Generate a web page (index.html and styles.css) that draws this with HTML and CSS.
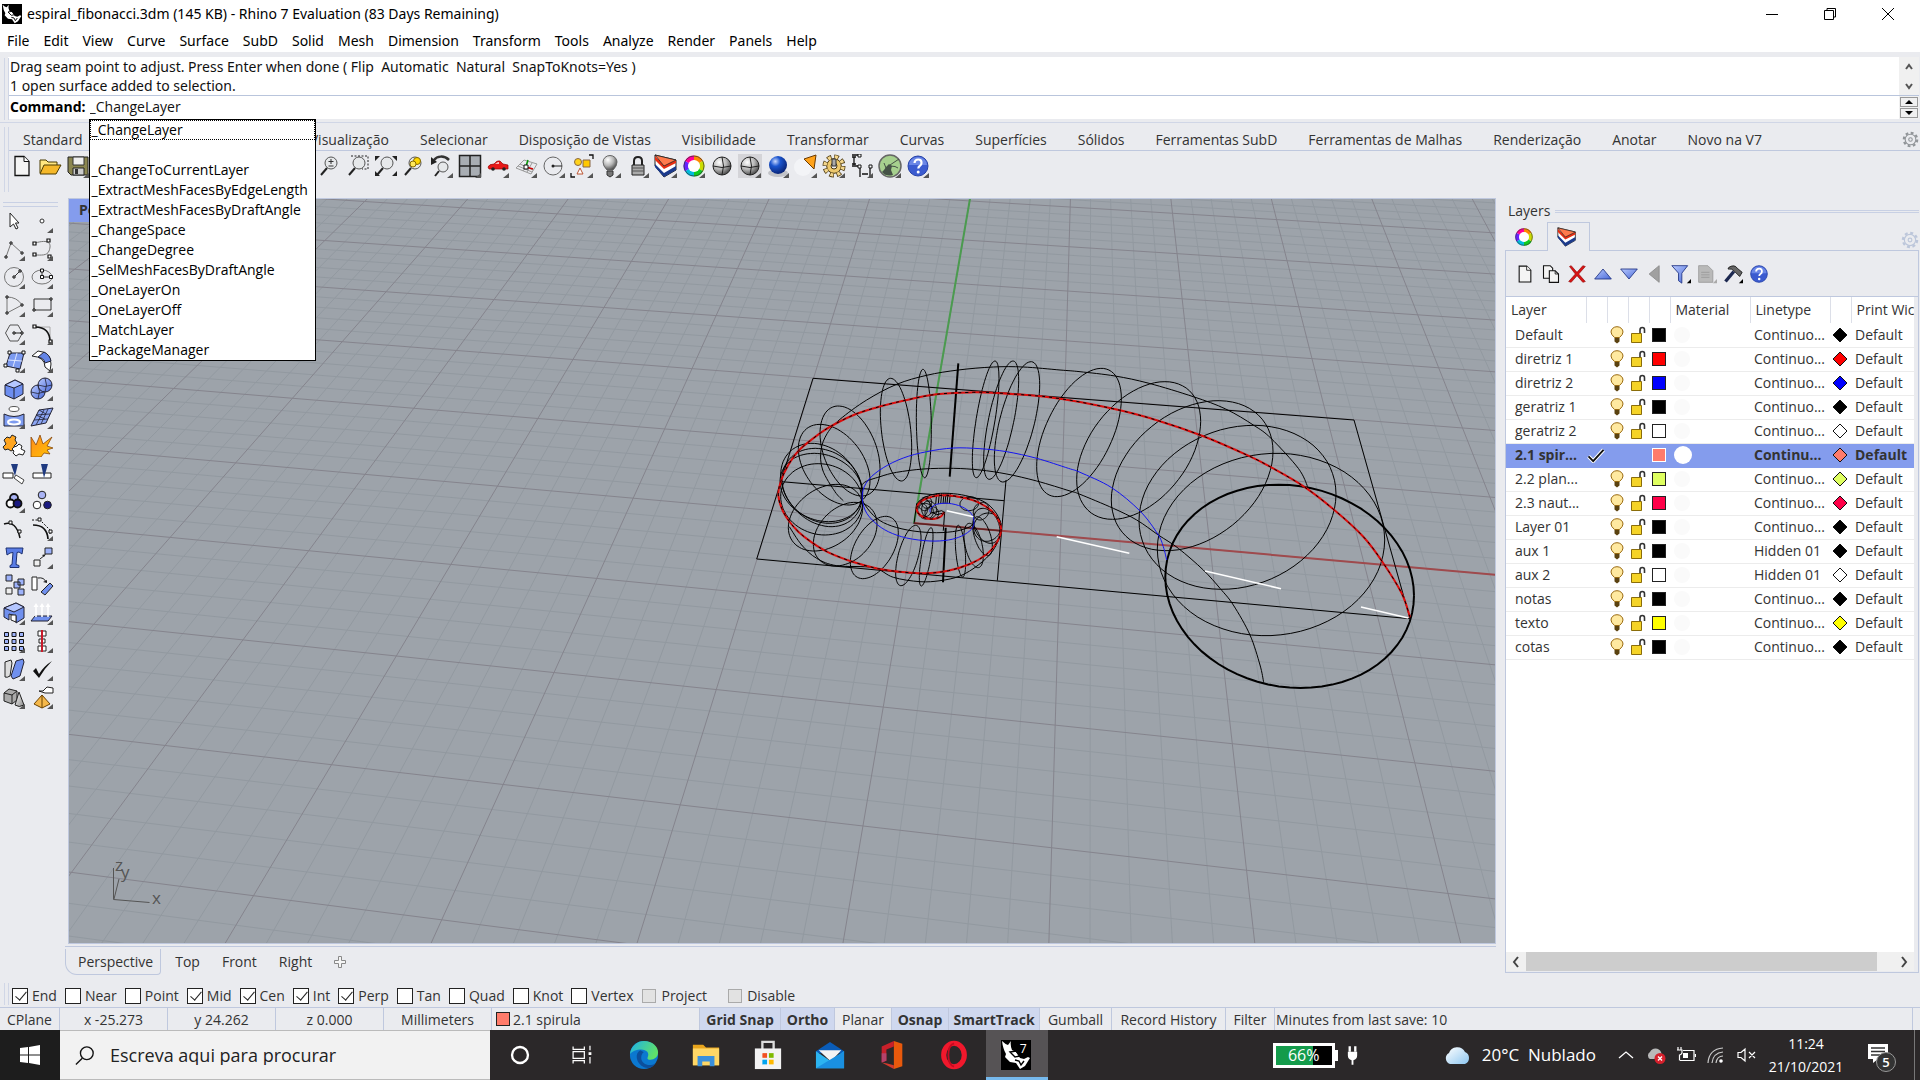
FILE: index.html
```html
<!DOCTYPE html>
<html lang="en">
<head>
<meta charset="utf-8">
<title>espiral_fibonacci.3dm (145 KB) - Rhino 7 Evaluation</title>
<link rel="stylesheet" href="styles.css">
</head>
<body>
<svg class="sprite" aria-hidden="true">
  <defs>
    <linearGradient id="gBlue" x1="0" y1="0" x2="1" y2="1"><stop offset="0" stop-color="#b9caff"/><stop offset="1" stop-color="#4a6ad8"/></linearGradient>
    <linearGradient id="gGrey" x1="0" y1="0" x2="1" y2="1"><stop offset="0" stop-color="#fff"/><stop offset="1" stop-color="#8a8a8a"/></linearGradient>
    <linearGradient id="gOrange" x1="0" y1="0" x2="1" y2="1"><stop offset="0" stop-color="#ff8a1e"/><stop offset="1" stop-color="#ffc400"/></linearGradient>
    <radialGradient id="rGrey" cx=".35" cy=".3" r=".8"><stop offset="0" stop-color="#fff"/><stop offset=".5" stop-color="#b5b5b5"/><stop offset="1" stop-color="#333"/></radialGradient>
    <radialGradient id="rBlue" cx=".35" cy=".3" r=".8"><stop offset="0" stop-color="#c8d8ff"/><stop offset=".35" stop-color="#1b55cf"/><stop offset="1" stop-color="#051a66"/></radialGradient>
    <linearGradient id="gCloud" x1="0" y1="0" x2="1" y2="1"><stop offset="0" stop-color="#fff"/><stop offset="1" stop-color="#8dc6f0"/></linearGradient>
    <linearGradient id="gEdge" x1="0" y1="0" x2="1" y2=".4"><stop offset="0" stop-color="#1cb0ea"/><stop offset="1" stop-color="#5fe06a"/></linearGradient>
    <symbol id="tick" viewBox="0 0 24 24"><path d="M23 19v5h-6z" fill="#555"/></symbol>
    <symbol id="page" viewBox="0 0 24 24"><path d="M5 2.500h9l5 5v14H5z" fill="#f4f4f4" stroke="#111" stroke-width="1.300"/><path d="M14 2.500v5h5" fill="#fff" stroke="#111"/></symbol>
    <symbol id="pages" viewBox="0 0 24 24"><path d="M3 2h8l3 3v12H3z" fill="#f4f4f4" stroke="#111" stroke-width="1.300"/><path d="M10 8h7l4 4v10H10z" fill="#f4f4f4" stroke="#111" stroke-width="1.300"/><path d="M17 8v4h4" fill="none" stroke="#111"/></symbol>
    <symbol id="folder" viewBox="0 0 24 24"><path d="M2 19V6h6l2 2h9v3" fill="#ffe680" stroke="#4b3a00"/><path d="M2 20 6 11h17l-5 9z" fill="#f5b82a" stroke="#4b3a00"/></symbol>
    <symbol id="save" viewBox="0 0 24 24"><path d="M2 3h20v18H5l-3-3z" fill="#8b8650" stroke="#222"/><path d="M7 3h11v8H7z" fill="#eee" stroke="#333"/><path d="M7 14h11v7H7z" fill="#ccc" stroke="#222"/><path d="M9 15h3v5H9z" fill="#333"/></symbol>
    <symbol id="mag" viewBox="0 0 24 24"><path d="m9 14-6 7" stroke="#222" stroke-width="2"/><circle cx="13" cy="9" r="6" fill="#e6e8ea" stroke="#555"/></symbol>
    <symbol id="zoom" viewBox="0 0 24 24"><use href="#mag"/><path d="M13 5v5M10.500 7.500h5M10.500 12h5" stroke="#333"/></symbol>
    <symbol id="zoomwin" viewBox="0 0 24 24"><use href="#mag"/><path d="M5 2h17v13H16" fill="none" stroke="#222" stroke-dasharray="2 1.500"/></symbol>
    <symbol id="zoomext" viewBox="0 0 24 24"><use href="#mag"/><path d="M1 2h5L1 7zM23 2v5l-5-5zM1 22v-5l5 5zM23 22h-5l5-5z" fill="#222"/></symbol>
    <symbol id="zoomsel" viewBox="0 0 24 24"><use href="#mag"/><circle cx="15" cy="7" r="3.500" fill="#ffd800" stroke="#886b00"/><circle cx="11" cy="10" r="3" fill="#ffe95a" stroke="#886b00"/></symbol>
    <symbol id="undoview" viewBox="0 0 24 24"><path d="m9 17-4 5" stroke="#222" stroke-width="2"/><circle cx="13" cy="13" r="5" fill="#e6e8ea" stroke="#555"/><path d="M19 6C14 1 7 2 4 6" fill="none" stroke="#333" stroke-width="2.500"/><path d="M1 3v8l6-3z" fill="#222"/></symbol>
    <symbol id="four" viewBox="0 0 24 24"><path d="M1.500 1.500h21v21h-21z" fill="#a8adb3" stroke="#222" stroke-width="1.500"/><path d="M12 1v22M1 12h22" stroke="#222" stroke-width="1.500"/></symbol>
    <symbol id="car" viewBox="0 0 24 24"><path d="M2 13q1-3 6-3 3-4 6-3l3 3 5 1v4H3z" fill="#e81818" stroke="#900" stroke-width=".7"/><path d="m9 10 3-2h1v2z" fill="#fbb"/><circle cx="7" cy="15" r="1.800" fill="#222"/><circle cx="18" cy="15" r="1.800" fill="#222"/></symbol>
    <symbol id="cplane" viewBox="0 0 24 24"><path d="m2 14 8-8 13 4-6 10zM6 10l13 6M4 12l14 6M14 8 9 17M18 9l-5 9" fill="none" stroke="#999"/><path d="m12 13 7 2" stroke="#c00" stroke-width="1.500"/><path d="m12 12 2-6" stroke="#090" stroke-width="1.500"/><path d="M10 11h4v4h-4z" fill="#fff" stroke="#111"/></symbol>
    <symbol id="circ" viewBox="0 0 24 24"><circle cx="11" cy="12" r="9" fill="none" stroke="#666"/><path d="M11 12h9" stroke="#222"/><circle cx="11" cy="12" r="1.500" fill="#222"/></symbol>
    <symbol id="shapes" viewBox="0 0 24 24"><path d="M19 1h4v4M1 19v4h4" fill="none" stroke="#111" stroke-width="1.300"/><circle cx="8" cy="8" r="3.500" fill="#ffd21c" stroke="#864"/><path d="M13 6h7v7h-7z" fill="#ffc800" stroke="#864"/><path d="m10 14 3 6H7z" fill="#fff" stroke="#b53"/></symbol>
    <symbol id="lamp" viewBox="0 0 24 24"><path d="M9 16q-4-4-4-8a7 6.500 0 0 1 14 0q0 4-4 8z" fill="url(#rGrey)" stroke="#666"/><path d="M9 17h6v4l-3 2-3-2z" fill="#777" stroke="#333"/></symbol>
    <symbol id="padlock" viewBox="0 0 24 24"><path d="M8 11V7q0-4 4-4t4 4v4" fill="none" stroke="#222" stroke-width="2"/><path d="M6 11h12v10H6z" fill="#aaa" stroke="#222"/><path d="M6 14h12M6 17h12" stroke="#555"/></symbol>
    <symbol id="cake" viewBox="0 0 24 24"><path d="M1 1v11l9 11 12-7V6z" fill="#fff" stroke="#222"/><path d="M1 10v3l9 10 12-7v-4l-12 7z" fill="#1b3a8c"/><path d="M1 2v4l9 9 12-6V6l-12 5z" fill="#e62e12"/><path d="m1 1 21 5-12 6z" fill="#ff7a4c" stroke="#222" stroke-width=".8"/></symbol>
    <symbol id="wheel" viewBox="0 0 24 24"><g fill="none" stroke-width="5"><path d="M12 4a8 8 0 0 1 6.930 4" stroke="#f80"/><path d="M18.930 8a8 8 0 0 1 0 8" stroke="#cd0"/><path d="M18.930 16A8 8 0 0 1 12 20" stroke="#1c2"/><path d="M12 20a8 8 0 0 1-6.930-4" stroke="#0bd"/><path d="M5.070 16a8 8 0 0 1 0-8" stroke="#62f"/><path d="M5.070 8A8 8 0 0 1 12 4" stroke="#f09"/></g><circle cx="12" cy="12" r="10" fill="none" stroke="#333" stroke-width=".7"/><circle cx="12" cy="12" r="6" fill="#fff"/></symbol>
    <symbol id="ball" viewBox="0 0 24 24"><circle cx="12" cy="12" r="9" fill="url(#rGrey)" stroke="#222"/><path d="M3 12q9 3 18 0M12 3q3 9 0 18" fill="none" stroke="#222"/></symbol>
    <symbol id="balldots" viewBox="0 0 24 24"><path d="M0 0h24v24H0z" fill="#d4d4d8"/><use href="#ball"/></symbol>
    <symbol id="blueball" viewBox="0 0 24 24"><ellipse cx="12" cy="19" rx="10" ry="4" fill="#c2c3c8"/><circle cx="12" cy="11" r="9" fill="url(#rBlue)"/></symbol>
    <symbol id="spot" viewBox="0 0 24 24"><circle cx="9" cy="13" r="9" fill="#f3f4f7"/><path d="m10 5 12-4-2 14z" fill="#ffa21a" stroke="#6b3a00"/></symbol>
    <symbol id="gears" viewBox="0 0 24 24"><circle cx="12" cy="12" r="9" fill="none" stroke="#4b3810" stroke-width="5" stroke-dasharray="4.300 2.770"/><circle cx="12" cy="12" r="7.300" fill="#edc86c" stroke="#4b3810"/><circle cx="12" cy="12" r="9" fill="none" stroke="#f3d68c" stroke-width="3.500" stroke-dasharray="3 4.070" stroke-dashoffset="-.6"/><circle cx="12" cy="12" r="3" fill="#eee" stroke="#4b3810"/><path d="M10 5h4v7h-4z" fill="#aaa" stroke="#333"/></symbol>
    <symbol id="dims" viewBox="0 0 24 24"><path d="M2 1h8M4 3v8M2 12h8v11M20 12v11M12 20h6M2 3h4M2 10h4" fill="none" stroke="#111" stroke-width="1.300"/><path d="M8 0h3v3H8zM8 11h3v3H8zM19 11h3v3h-3z" fill="#fff" stroke="#111"/></symbol>
    <symbol id="hopper" viewBox="0 0 24 24"><circle cx="12" cy="12" r="11" fill="#a6d08e" stroke="#666" stroke-width="1.500"/><path d="m8 13 3-3 3 2-1 4 2 5q-7 2-11-3l2-2z" fill="#455246"/><path d="m12 11 9-6M8 14 6 9M12 12q6 0 8 2" fill="none" stroke="#455246"/></symbol>
    <symbol id="help" viewBox="0 0 24 24"><circle cx="12" cy="12" r="10" fill="#3b5bd0" stroke="#2742a8"/><path d="M3 11a9 8 0 0 1 18 0z" fill="#6a86e6"/><path d="M8.500 9q.3-3.500 3.700-3.500T15.500 9q0 2-1.800 3-1.400.9-1.400 2.500" fill="none" stroke="#fff" stroke-width="2.200"/><circle cx="12.200" cy="18" r="1.500" fill="#fff"/></symbol>
    <symbol id="gear" viewBox="0 0 24 24"><circle cx="12" cy="12" r="9.500" fill="none" stroke="currentColor" stroke-width="3" stroke-dasharray="4 3.460"/><circle cx="12" cy="12" r="7.500" fill="none" stroke="currentColor" stroke-width="1.500"/><circle cx="12" cy="12" r="2.500" fill="none" stroke="currentColor" stroke-width="1.500"/></symbol>
    <symbol id="cursor" viewBox="0 0 24 24"><path d="M8 4v14l3.500-3 2.500 5 2-1-2.500-5H17z" fill="#fff" stroke="#222"/></symbol>
    <symbol id="point" viewBox="0 0 24 24"><circle cx="12" cy="12" r="2" fill="#fff" stroke="#333"/></symbol>
    <symbol id="pline" viewBox="0 0 24 24"><path d="M4 20 9 6l11 10" fill="none" stroke="#777"/><path d="M3 19h2v2H3zM8 5h2v2H8zM19 15h2v2h-2z" fill="#fff" stroke="#111"/></symbol>
    <symbol id="curve" viewBox="0 0 24 24"><path d="M5 6c14-4 17 0 14 8-2 5-8 4-14 4" fill="none" stroke="#777"/><path d="M3 5h3v3H3zM17 2h3v3h-3zM3 16h3v3H3zM18 18h3v3h-3z" fill="#fff" stroke="#111" stroke-width="1.200"/></symbol>
    <symbol id="circle" viewBox="0 0 24 24"><circle cx="12" cy="12" r="9.500" fill="none" stroke="#777"/><path d="m12 12 6-6" stroke="#333"/><path d="M11 11h2v2h-2zM17 5h2v2h-2z" fill="#fff" stroke="#111"/></symbol>
    <symbol id="oval" viewBox="0 0 24 24"><ellipse cx="12" cy="12" rx="10" ry="7" fill="none" stroke="#777"/><path d="M12 5v7h9" fill="none" stroke="#333"/><path d="M10.500 4h3v3h-3zM10.500 10.500h3v3h-3zM19.500 10.500h3v3h-3z" fill="#fff" stroke="#111"/></symbol>
    <symbol id="arc" viewBox="0 0 24 24"><path d="M5 4q10 0 15 8L5 20z" fill="none" stroke="#777"/><path d="M4 3h2v2H4zM19 11h2v2h-2zM4 19h2v2H4z" fill="#fff" stroke="#111"/></symbol>
    <symbol id="rect" viewBox="0 0 24 24"><path d="M4 6h17v11H4z" fill="none" stroke="#333"/><path d="M20 5h2v2h-2zM3 16h2v2H3z" fill="#fff" stroke="#111"/></symbol>
    <symbol id="hex" viewBox="0 0 24 24"><path d="m8 4h8l4.500 8-4.500 8H8l-4.500-8z" fill="none" stroke="#555"/><path d="M12 12h8" stroke="#222"/><path d="M11 11h2v2h-2zM19 11h2v2h-2z" fill="#fff" stroke="#111"/></symbol>
    <symbol id="fillet" viewBox="0 0 24 24"><path d="M5 6h15v15" fill="none" stroke="#aaa"/><path d="M5 6q15 0 15 15" fill="none" stroke="#111" stroke-width="1.700"/><path d="M3 4h3v3H3zM19 19h3v3h-3z" fill="#fff" stroke="#111" stroke-width="1.200"/></symbol>
    <symbol id="srf" viewBox="0 0 24 24"><path d="M8 4h14l-4 16-14-3z" fill="#7d9bf0" stroke="#223"/><path d="m15 4-4 14M6 11l14 1" stroke="#dfe7ff"/><path d="M6 2h3v3H6zM20 2h3v3h-3zM2 15h3v3H2zM14 20h3v3h-3z" fill="#fff" stroke="#111"/></symbol>
    <symbol id="sweep" viewBox="0 0 24 24"><path d="M2 7 8 2q13 1 13 13l-1 7-5-4Q15 8 2 7z" fill="#fff" stroke="#222"/><path d="m8 8 6-5q6 3 7 9l-6 2q-1-5-7-6z" fill="#6384e6" stroke="#223"/></symbol>
    <symbol id="box" viewBox="0 0 24 24"><path d="m3 8 10-5 8 4v10l-9 5-9-4z" fill="#6d8ef0" stroke="#223"/><path d="m3 8 9 3 9-4-8-4z" fill="#b4c6ff" stroke="#223"/><path d="M12 11v11" stroke="#223"/></symbol>
    <symbol id="spheres" viewBox="0 0 24 24"><circle cx="8" cy="15" r="7" fill="url(#gBlue)" stroke="#223"/><circle cx="15" cy="8" r="7" fill="url(#gBlue)" stroke="#223"/><path d="M8 8q3 6 0 14M1 15q7 3 13 0M15 1q3 7 0 14M8 8q7 3 14 0" fill="none" stroke="#223" stroke-width=".8"/></symbol>
    <symbol id="tube" viewBox="0 0 24 24"><ellipse cx="12" cy="4" rx="5" ry="2.500" fill="#fff" stroke="#555"/><path d="M2 9q10 5 20 0v12H2z" fill="#7d9bf0" stroke="#223"/><ellipse cx="12" cy="17" rx="6" ry="2.500" fill="none" stroke="#fff" stroke-width="2"/></symbol>
    <symbol id="mesh" viewBox="0 0 24 24"><path d="m9 5 14-2-7 15-15 3z" fill="#8ba5f2" stroke="#223"/><path d="m14 5-8 15M18 4l-7 15M6 10l14-1M4 15l14-1M9 5l7 4M6 10l9 4" fill="none" stroke="#223" stroke-width=".8"/></symbol>
    <symbol id="puzzle" viewBox="0 0 24 24"><path d="m2 7 3-3 3 1 2-3 4 2-1 3 2 3-3 3 1 3-4 2-3-2-3 1-2-3 3-3z" fill="#ffa51f" stroke="#222"/><path d="m12 14 3-1 2-2 3 2-1 3 4 2-2 4-4-1-3 2-3-3 1-2-2-2z" fill="#fff" stroke="#222"/></symbol>
    <symbol id="burst" viewBox="0 0 24 24"><path d="M1 24V4l5 8 4-10 3 9 9-7-5 9 6 2-6 2 3 4-6-1-3 4z" fill="url(#gOrange)" stroke="#7a3a00" stroke-width=".7"/></symbol>
    <symbol id="trim" viewBox="0 0 24 24"><path d="M9 3h7l-3 12z" fill="#1f3a80"/><path d="M1 12h10v5H1z" fill="#fff" stroke="#222"/><path d="m14 14 8 5-2 4-8-6z" fill="#fff" stroke="#444"/></symbol>
    <symbol id="split" viewBox="0 0 24 24"><path d="M3 12h18v5H3z" fill="#fff" stroke="#222"/><path d="M11 3h7l-4 14z" fill="#1f3a80"/></symbol>
    <symbol id="group" viewBox="0 0 24 24"><g stroke="#111" stroke-width="1.800"><circle cx="12" cy="9" r="4" fill="#aab4f5"/><circle cx="8.500" cy="14.500" r="4" fill="#fff"/><circle cx="15.500" cy="14.500" r="4" fill="#1a1a80"/></g></symbol>
    <symbol id="ungroup" viewBox="0 0 24 24"><g stroke="#222"><circle cx="12" cy="6" r="3.800" fill="#aab4f5"/><circle cx="7" cy="16" r="3.800" fill="#fff"/><circle cx="17.500" cy="16" r="3.800" fill="#1a1a80"/></g></symbol>
    <symbol id="join" viewBox="0 0 24 24"><path d="M2 7q12-4 16 14" fill="none" stroke="#111" stroke-width="1.500"/><path d="M7 4h3v3H7zM16 13h3v3h-3z" fill="#fff" stroke="#111"/></symbol>
    <symbol id="offset" viewBox="0 0 24 24"><path d="M3 8q14 0 15 14" fill="none" stroke="#111" stroke-width="1.700"/><path d="M2 3h8l10 10v4" fill="none" stroke="#111" stroke-dasharray="2 1.500"/><path d="M8 1h3v3H8zM19 13h3v3h-3z" fill="#fff" stroke="#111"/></symbol>
    <symbol id="tee" viewBox="0 0 24 24"><path d="M4 3h17l-1 6-3-2-2 .5-1 12 3 1v2H8v-2l2-1 1-12-3 .5-3 2z" fill="#5a7de6" stroke="#1d3070"/></symbol>
    <symbol id="move" viewBox="0 0 24 24"><path d="M4 15h6v6H4z" fill="#eee" stroke="#222"/><path d="M15 3h7v6h-7z" fill="#9db2fa" stroke="#222"/><path d="m10 14 5-4" stroke="#222"/><path d="m16 9-4 1 2 2z" fill="#222"/></symbol>
    <symbol id="copy" viewBox="0 0 24 24"><g fill="#9db2fa" stroke="#222"><path d="M4 2h6v6H4zM16 6h6v6h-6zM12 9h6v6h-6zM16 16h6v6h-6z"/><path d="M4 15h6v6H4z" fill="#eee"/></g></symbol>
    <symbol id="rotate" viewBox="0 0 24 24"><path d="M2 4h5v13H2z" fill="#fff" stroke="#222"/><path d="m11 19 9-9 3 3-8 9z" fill="#7090ee" stroke="#222"/><path d="M8 5q6-1 8 4" fill="none" stroke="#222"/><path d="m17 10-4-1 4-2z" fill="#222"/></symbol>
    <symbol id="corner" viewBox="0 0 24 24"><path d="m2 7 12-5 8 4v11l-8 5v-7l-7-2v6l-5-3z" fill="#7090ee" stroke="#223"/><path d="m2 7 10 4 10-5-8-4z" fill="#b4c6ff" stroke="#223"/><path d="M9 14h5v7l-5-2z" fill="#fff" stroke="#222"/></symbol>
    <symbol id="extrude" viewBox="0 0 24 24"><path d="m1 20 4-5h17l-4 5z" fill="#7090ee" stroke="#223"/><path d="M6 16V5M12 16V5M18 16V5" stroke="#fff" stroke-width="1.600"/><path d="m3.500 6 2.500-4 2.500 4zm6 0L12 2l2.500 4zm6 0L18 2l2.500 4z" fill="#fff"/></symbol>
    <symbol id="array" viewBox="0 0 24 24"><g fill="#9db2fa" stroke="#111"><path d="M2.500 3.500h4v4h-4zM10 3.500h4v4h-4zM17.500 3.500h4v4h-4zM2.500 10.500h4v4h-4zM10 10.500h4v4h-4zM17.500 10.500h4v4h-4z"/><path d="M2.500 17.500h4v4h-4zM10 17.500h4v4h-4zM17.500 17.500h4v4h-4z"/></g></symbol>
    <symbol id="align" viewBox="0 0 24 24"><path d="M8 2h8v5H8zM9 10h6v4H9zM8 17h8v5H8z" fill="#fff" stroke="#222"/><path d="M12 1v22" stroke="#c81a2a" stroke-width="2"/></symbol>
    <symbol id="bend" viewBox="0 0 24 24"><path d="m3 5 6-2 1 3-2 13q-3 2-5 1z" fill="#ddd" stroke="#222"/><path d="m14 4 7-2 1 3-4 14-7 3-2-3z" fill="#7090ee" stroke="#223"/></symbol>
    <symbol id="check" viewBox="0 0 24 24"><path d="m3 14 3-3 3 6Q14 9 22 4 14 12 9 21z" fill="#111"/></symbol>
    <symbol id="solids" viewBox="0 0 24 24"><path d="m2 8 5-4 8 2v9l-5 4-8-3z" fill="#aaa" stroke="#222"/><path d="m2 8 8 2 5-4M10 10v9" fill="none" stroke="#222"/><path d="m17 7 5 13q-5 3-9 0z" fill="url(#gGrey)" stroke="#222"/></symbol>
    <symbol id="pyramid" viewBox="0 0 24 24"><path d="m12 10 8 9-8 4-8-4z" fill="#f5b84a" stroke="#6b4200"/><path d="M12 10v13" stroke="#6b4200"/><path d="M9 6h4l4-4 6 1v5h-8z" fill="#fff" stroke="#222"/></symbol>
    <symbol id="ex" viewBox="0 0 24 24"><path d="m3 3 2-1 7 8 7-8 3 1-8 9 8 9-3 1-7-8-7 8-3-1 8-9z" fill="#d81414" stroke="#8a0000" stroke-width=".7"/></symbol>
    <symbol id="up" viewBox="0 0 24 24"><path d="m12 6 10 12H2z" fill="url(#gBlue)" stroke="#1c2f80"/></symbol>
    <symbol id="down" viewBox="0 0 24 24"><path d="M12 18 22 6H2z" fill="url(#gBlue)" stroke="#1c2f80"/></symbol>
    <symbol id="left" viewBox="0 0 24 24"><path d="M17 2v20L5 12z" fill="#a0a0a0" stroke="#888"/></symbol>
    <symbol id="funnel" viewBox="0 0 24 24"><path d="M1 2h19l-7 9v12l-4-3v-9z" fill="url(#gBlue)" stroke="#1c2f80"/><path d="M24 18v5h-5z" fill="#000"/></symbol>
    <symbol id="doc" viewBox="0 0 24 24"><path d="M2 2h11l6 6v14H2z" fill="#b9b9b9" stroke="#999"/><path d="M5 10h10M5 13h10M5 16h10" stroke="#999"/><path d="M24 18v5h-5z" fill="#aaa"/></symbol>
    <symbol id="hammer" viewBox="0 0 24 24"><path d="M13 9 3 21" stroke="#1c2850" stroke-width="4"/><path d="M7 4q7-4 10 1l6 5-3 5-6-6q-3-4-8-3z" fill="#666" stroke="#111"/><path d="M24 18v5h-5z" fill="#000"/></symbol>
    <symbol id="bulb" viewBox="0 0 14 18"><path d="M4.500 11.500Q1 8.500 1 6a6 5.300 0 0 1 12 0q0 2.500-3.500 5.500z" fill="#ffe9a0" stroke="#9a6a10"/><path d="M4.500 12h5v3.500l-2.500 2-2.500-2z" fill="#5a4210"/></symbol>
    <symbol id="unlock" viewBox="0 0 16 18"><path d="M10 8V4q0-2.500 2.300-2.500T14.500 4v3" fill="none" stroke="#333" stroke-width="1.600"/><path d="M1.500 7.500h10v9h-10z" fill="#f5d327" stroke="#8a6d0a"/></symbol>
    <symbol id="mark" viewBox="0 0 18 16"><path d="m1 9 5 5L17 2" fill="none" stroke="#fff" stroke-width="4"/><path d="m1 9 5 5L17 2" fill="none" stroke="#111" stroke-width="2"/></symbol>
    <symbol id="diamond" viewBox="0 0 16 16"><path class="edge" d="m8 1 7 7-7 7-7-7z" fill="currentColor"/></symbol>
    <symbol id="rhino" viewBox="0 0 30 30"><path d="M0 0h30v30H0z" fill="#000"/><path d="M1 1q1 8 4 13l-1 3 5 5 6 1 4 6 5-3 5-8-2-1-4 2-4-1-4-6-4-2q-2-5-1-9l-3 4q-3-1-6-4z" fill="#fff"/><path d="m9 12 6-1 4 5-5 1zM14 20l4 1 2 4 3-4" fill="none" stroke="#000" stroke-width="1.400"/></symbol>
  </defs>
</svg>

<header class="titlebar">
  <svg class="app-icon"><use href="#rhino"/></svg>
  <h1 class="title">espiral_fibonacci.3dm (145 KB) - Rhino 7 Evaluation (83 Days Remaining)</h1>
  <div class="win-buttons">
    <button type="button" aria-label="Minimize"><svg viewBox="0 0 14 14"><path d="M1 7.500h12" stroke="#000"/></svg></button>
    <button type="button" aria-label="Restore"><svg viewBox="0 0 14 14"><path d="M1.500 3.500h9v9h-9zM4 3V1.500h8.500V10H11" fill="none" stroke="#000"/></svg></button>
    <button type="button" aria-label="Close"><svg viewBox="0 0 14 14"><path d="m1 1 12 12M13 1 1 13" stroke="#000"/></svg></button>
  </div>
</header>
<nav class="menubar">
  <button type="button">File</button><button type="button">Edit</button><button type="button">View</button><button type="button">Curve</button><button type="button">Surface</button><button type="button">SubD</button><button type="button">Solid</button><button type="button">Mesh</button><button type="button">Dimension</button><button type="button">Transform</button><button type="button">Tools</button><button type="button">Analyze</button><button type="button">Render</button><button type="button">Panels</button><button type="button">Help</button>
</nav>

<section class="command">
  <div class="command-main">
    <div class="history"><p>Drag seam point to adjust. Press Enter when done ( Flip&nbsp; Automatic&nbsp; Natural&nbsp; SnapToKnots=Yes )</p><p>1 open surface added to selection.</p></div>
    <div class="prompt">
      <label for="cmd">Command:</label>
      <div class="combo">
        <input id="cmd" type="text" value="_ChangeLayer">
        <ul class="suggest" role="listbox" aria-label="Commands">
          <li class="focus" role="option">_ChangeLayer</li><li role="option" aria-label="blank"></li><li role="option">_ChangeToCurrentLayer</li><li role="option">_ExtractMeshFacesByEdgeLength</li><li role="option">_ExtractMeshFacesByDraftAngle</li><li role="option">_ChangeSpace</li><li role="option">_ChangeDegree</li><li role="option">_SelMeshFacesByDraftAngle</li><li role="option">_OneLayerOn</li><li role="option">_OneLayerOff</li><li role="option">_MatchLayer</li><li role="option">_PackageManager</li>
        </ul>
      </div>
    </div>
  </div>
  <div class="command-side">
    <div class="scroll-v">
      <button type="button" aria-label="Scroll up"><svg viewBox="0 0 8 8"><path d="m1 6 3-4 3 4" fill="none" stroke="#555" stroke-width="2"/></svg></button>
      <button type="button" aria-label="Scroll down"><svg viewBox="0 0 8 8"><path d="m1 2 3 4 3-4" fill="none" stroke="#555" stroke-width="2"/></svg></button>
    </div>
    <div class="spin">
      <button type="button" aria-label="Previous"><svg viewBox="0 0 8 6"><path d="m4 1 4 4H0z"/></svg></button>
      <button type="button" aria-label="Next"><svg viewBox="0 0 8 6"><path d="m4 5 4-4H0z"/></svg></button>
    </div>
  </div>
</section>

<section class="ribbon">
  <div class="ribbon-tabs">
    <button type="button" class="tab-standard">Standard</button><button type="button" class="tab-vis">Visualização</button><button type="button">Selecionar</button><button type="button">Disposição de Vistas</button><button type="button">Visibilidade</button><button type="button">Transformar</button><button type="button">Curvas</button><button type="button">Superfícies</button><button type="button">Sólidos</button><button type="button">Ferramentas SubD</button><button type="button">Ferramentas de Malhas</button><button type="button">Renderização</button><button type="button">Anotar</button><button type="button">Novo na V7</button>
    <button type="button" class="ribbon-gear" aria-label="Options"><svg><use href="#gear"/></svg></button>
  </div>
  <div class="ribbon-icons">
    <svg><use href="#page"/></svg><svg><use href="#folder"/></svg><svg><use href="#save"/><use href="#tick"/></svg>
    <svg class="after-gap"><use href="#zoom"/></svg><svg><use href="#zoomwin"/></svg><svg><use href="#zoomext"/></svg><svg><use href="#zoomsel"/></svg><svg><use href="#undoview"/><use href="#tick"/></svg><svg><use href="#four"/><use href="#tick"/></svg><svg><use href="#car"/><use href="#tick"/></svg><svg><use href="#cplane"/><use href="#tick"/></svg><svg><use href="#circ"/><use href="#tick"/></svg><svg><use href="#shapes"/><use href="#tick"/></svg><svg><use href="#lamp"/><use href="#tick"/></svg><svg><use href="#padlock"/><use href="#tick"/></svg><svg><use href="#cake"/><use href="#tick"/></svg><svg><use href="#wheel"/><use href="#tick"/></svg><svg><use href="#ball"/></svg><svg><use href="#balldots"/><use href="#tick"/></svg><svg><use href="#blueball"/><use href="#tick"/></svg><svg><use href="#spot"/><use href="#tick"/></svg><svg><use href="#gears"/><use href="#tick"/></svg><svg><use href="#dims"/><use href="#tick"/></svg><svg><use href="#hopper"/><use href="#tick"/></svg><svg><use href="#help"/><use href="#tick"/></svg>
  </div>
</section>

<main class="workspace">
  <aside class="tools">
    <div class="tool-grid">
      <svg><use href="#cursor"/></svg><svg><use href="#point"/><use href="#tick"/></svg>
      <svg><use href="#pline"/><use href="#tick"/></svg><svg><use href="#curve"/><use href="#tick"/></svg>
      <svg><use href="#circle"/><use href="#tick"/></svg><svg><use href="#oval"/><use href="#tick"/></svg>
      <svg><use href="#arc"/><use href="#tick"/></svg><svg><use href="#rect"/><use href="#tick"/></svg>
      <svg><use href="#hex"/><use href="#tick"/></svg><svg><use href="#fillet"/><use href="#tick"/></svg>
      <svg><use href="#srf"/><use href="#tick"/></svg><svg><use href="#sweep"/><use href="#tick"/></svg>
      <svg><use href="#box"/><use href="#tick"/></svg><svg><use href="#spheres"/><use href="#tick"/></svg>
      <svg><use href="#tube"/><use href="#tick"/></svg><svg><use href="#mesh"/><use href="#tick"/></svg>
      <svg><use href="#puzzle"/></svg><svg><use href="#burst"/></svg>
      <svg><use href="#trim"/></svg><svg><use href="#split"/></svg>
      <svg><use href="#group"/><use href="#tick"/></svg><svg><use href="#ungroup"/></svg>
      <svg><use href="#join"/></svg><svg><use href="#offset"/><use href="#tick"/></svg>
      <svg><use href="#tee"/></svg><svg><use href="#move"/><use href="#tick"/></svg>
      <svg><use href="#copy"/></svg><svg><use href="#rotate"/></svg>
      <svg><use href="#corner"/><use href="#tick"/></svg><svg><use href="#extrude"/><use href="#tick"/></svg>
      <svg><use href="#array"/><use href="#tick"/></svg><svg><use href="#align"/><use href="#tick"/></svg>
      <svg><use href="#bend"/><use href="#tick"/></svg><svg><use href="#check"/><use href="#tick"/></svg>
      <svg><use href="#solids"/><use href="#tick"/></svg><svg><use href="#pyramid"/><use href="#tick"/></svg>
    </div>
  </aside>

  <section class="views">
    <div class="viewport">
      <svg id="scene" viewBox="69 199 1426 744" preserveAspectRatio="xMinYMin slice">
        <g id="grid"></g>
        <g class="triad"><path d="M113.500 868v31.500l36 3M114 899l5-20" fill="none"/><text x="115" y="871">z</text><text x="121" y="878">y</text><text x="152" y="904">x</text></g>
        <g id="model"></g>
      </svg>
      <span class="view-label">Perspective</span>
    </div>
    <div class="view-tabs">
      <button type="button" class="active">Perspective</button><button type="button">Top</button><button type="button">Front</button><button type="button">Right</button>
      <button type="button" class="add" aria-label="Add view"><svg viewBox="0 0 12 12"><path d="M4.500.5h3v4h4v3h-4v4h-3v-4h-4v-3h4z" fill="#f5f5f5" stroke="#888"/></svg></button>
    </div>
  </section>

  <aside class="panel">
    <div class="panel-title"><h2>Layers</h2><span class="grip"></span></div>
    <div class="panel-tabs">
      <button type="button" aria-label="Properties"><svg><use href="#wheel"/></svg></button><button type="button" class="on" aria-label="Layers"><svg><use href="#cake"/></svg></button>
      <button type="button" class="panel-gear" aria-label="Options"><svg><use href="#gear"/></svg></button>
    </div>
    <div class="panel-body">
      <div class="panel-tools">
        <svg><use href="#page"/></svg><svg><use href="#pages"/></svg><svg><use href="#ex"/></svg><svg><use href="#up"/></svg><svg><use href="#down"/></svg><svg><use href="#left"/></svg><svg><use href="#funnel"/></svg><svg><use href="#doc"/></svg><svg><use href="#hammer"/></svg><svg><use href="#help"/></svg>
      </div>
      <div class="table-wrap">
        <table class="layers">
          <colgroup><col class="c-name"><col class="c-i"><col class="c-i"><col class="c-i"><col class="c-i"><col class="c-mat"><col class="c-mat"><col class="c-i"><col></colgroup>
          <thead><tr><th>Layer</th><th></th><th></th><th></th><th></th><th>Material</th><th>Linetype</th><th></th><th>Print Wic</th></tr></thead>
          <tbody id="rows"></tbody>
        </table>
      </div>
      <div class="scroll-h">
        <button type="button" aria-label="Scroll left"><svg viewBox="0 0 8 12"><path d="M6 1 2 6l4 5" fill="none" stroke="#444" stroke-width="2"/></svg></button><span class="thumb"></span><button type="button" aria-label="Scroll right"><svg viewBox="0 0 8 12"><path d="m2 1 4 5-4 5" fill="none" stroke="#444" stroke-width="2"/></svg></button>
      </div>
    </div>
  </aside>
</main>

<section class="osnap">
  <label><input type="checkbox" checked>End</label><label><input type="checkbox">Near</label><label><input type="checkbox">Point</label><label><input type="checkbox" checked>Mid</label><label><input type="checkbox" checked>Cen</label><label><input type="checkbox" checked>Int</label><label><input type="checkbox" checked>Perp</label><label><input type="checkbox">Tan</label><label><input type="checkbox">Quad</label><label><input type="checkbox">Knot</label><label><input type="checkbox">Vertex</label><label class="soft"><input type="checkbox">Project</label><label class="soft last"><input type="checkbox">Disable</label>
</section>

<section class="status">
  <button type="button" class="s-cplane">CPlane</button><span class="s-num">x -25.273</span><span class="s-num">y 24.262</span><span class="s-num">z 0.000</span><span class="s-num">Millimeters</span>
  <button type="button" class="s-layer"><span class="chip"></span>2.1 spirula</button>
  <button type="button" class="on s-80">Grid Snap</button><button type="button" class="on s-54">Ortho</button><button type="button" class="s-57">Planar</button><button type="button" class="on s-57">Osnap</button><button type="button" class="on s-90">SmartTrack</button><button type="button" class="s-72">Gumball</button><button type="button" class="s-114">Record History</button><button type="button" class="s-48">Filter</button><span class="s-msg">Minutes from last save: 10</span>
</section>

<footer class="taskbar">
  <button type="button" class="start" aria-label="Start"><svg viewBox="0 0 20 20"><path d="m0 3 8-1v7.500H0zM9 2l11-2v9.500H9zM0 10.500h8V18l-8-1zM9 10.500h11V20L9 18z" fill="#fff"/></svg></button>
  <label class="search"><svg viewBox="0 0 22 22"><circle cx="13" cy="8.500" r="7" fill="none" stroke="#111" stroke-width="1.500"/><path d="m8 14-7 7" stroke="#111" stroke-width="1.500"/></svg><input type="text" value="Escreva aqui para procurar" aria-label="Search"></label>
  <div class="apps">
    <button type="button" aria-label="Cortana"><svg viewBox="0 0 32 32"><circle cx="16" cy="16" r="8.500" fill="none" stroke="#fff" stroke-width="2.500"/></svg></button>
    <button type="button" aria-label="Task view"><svg viewBox="0 0 32 32"><path d="M6.500 7v3h12V7M6.500 25v-3h12v3M6.500 12.500h12v7h-12zM24.500 6v5M24.500 18v7" fill="none" stroke="#fff" stroke-width="1.300"/><path d="M23 13h3v3h-3z" fill="#fff"/></svg></button>
    <button type="button" aria-label="Edge"><svg viewBox="0 0 32 32"><circle cx="16" cy="16" r="15" fill="#0b78d0"/><path d="M1 15C2 6 9 1 16 1c9 0 15 6 15 12 0 5-4 8-8 8-3 0-4-1-3-3 2-4-1-8-7-8-5 0-10 2-12 5z" fill="url(#gEdge)"/><path d="M12 11c-6 3-5 14 4 18 5 2 10 0 12-4-6 4-15 1-15-6 0-4 2-6 3-6z" fill="#0c4f9c"/></svg></button>
    <button type="button" aria-label="Explorer"><svg viewBox="0 0 32 32"><path d="M2 5h11l3 3h14v19H2z" fill="#e8a41c"/><path d="M2 9h28v18H2z" fill="#ffd766"/><path d="M7 28V17h18v11h-5v-5h-8v5z" fill="#3a90dc"/></svg></button>
    <button type="button" aria-label="Store"><svg viewBox="0 0 32 32"><path d="M10 10V2h12v8" fill="none" stroke="#ddd" stroke-width="2.500"/><path d="M2 9h28v22H2z" fill="#f3f3f3"/><path d="M10 14h5v5h-5z" fill="#f25022"/><path d="M17 14h5v5h-5z" fill="#7fba00"/><path d="M10 21h5v5h-5z" fill="#00a4ef"/><path d="M17 21h5v5h-5z" fill="#ffb900"/></svg></button>
    <button type="button" aria-label="Mail"><svg viewBox="0 0 32 32"><path d="m1 12 15-10 15 10v2H1z" fill="#0a5cb8"/><path d="M4 11h24l-11 12z" fill="#f4f4f4"/><path d="M1 12l15 10 15-10v18H1z" fill="#2cb4f0"/><path d="M1 30 31 12v18z" fill="#1a90e0"/></svg></button>
    <button type="button" aria-label="Office"><svg viewBox="0 0 32 32"><path d="m18 1 9 3v24l-9 3z" fill="#e8590c"/><path d="M18 1 5 7v17l5-2V10l8-3z" fill="#c8202a"/><path d="m5 24 6 1 7 2v4z" fill="#d43a2c"/><path d="M5 14v10l5-2v-8z" fill="#b5426a"/></svg></button>
    <button type="button" aria-label="Opera"><svg viewBox="0 0 32 32"><ellipse cx="16" cy="16" rx="11" ry="12.500" fill="none" stroke="#f0182c" stroke-width="5.500"/><path d="M16 3.500q-6 2-6 12.500t6 12.500" fill="none" stroke="#c40a20" stroke-width="2"/></svg></button>
    <button type="button" class="current" aria-label="Rhino"><svg viewBox="0 0 32 32"><use href="#rhino" width="32" height="32"/><text x="20" y="14" class="seven">7</text></svg></button>
  </div>
  <div class="tray">
    <div class="battery"><span>66%</span></div>
    <svg class="plug" viewBox="0 0 14 20"><path d="M4 0v6M10 0v6" stroke="#fff" stroke-width="2.500"/><path d="M2 6h10v4q0 4-4 5v5H6v-5q-4-1-4-5z" fill="#fff"/></svg>
    <svg class="cloud" viewBox="0 0 28 22"><path d="M7 20a6 6 0 0 1-1-11 8.500 8 0 0 1 16-1 6.500 6.500 0 0 1 0 12z" fill="url(#gCloud)"/></svg>
    <span class="weather">20°C&nbsp; Nublado</span>
    <svg class="t16" viewBox="0 0 16 16"><path d="m1 11 7-6 7 6" fill="none" stroke="#fff" stroke-width="1.300"/></svg>
    <svg class="t20" viewBox="0 0 20 20"><path d="M4 14a4 4 0 0 1 0-7 6 6 0 0 1 11 0l2 7z" fill="#b9b9b9"/><circle cx="14" cy="13.500" r="5.500" fill="#d5202c"/><path d="m12 11.500 4 4m0-4-4 4" stroke="#fff" stroke-width="1.300"/></svg>
    <svg class="t20" viewBox="0 0 20 20"><path d="M7 5.500h11v10H4M19.500 9v3M2 2v3M5 2v3M1 5h5v3q-1 2-2.500 2v5.500" fill="none" stroke="#fff" stroke-width="1.200"/><path d="M7 8h5v5H7z" fill="#fff"/></svg>
    <svg class="t20" viewBox="0 0 20 20"><path d="M2 18Q3 4 17 3M6 18Q7 8 17 7M10 18q1-7 7-7" fill="none" stroke="#ccc" stroke-width="1.200"/><circle cx="15" cy="16" r="1.800" fill="#fff"/></svg>
    <svg class="t20" viewBox="0 0 20 20"><path d="M2 7.500h3L9 4v12l-4-3.500H2zM13 7l6 6m0-6-6 6" fill="none" stroke="#fff" stroke-width="1.200"/></svg>
    <div class="clock"><span>11:24</span><span>21/10/2021</span></div>
    <div class="notify"><svg viewBox="0 0 22 22"><path d="M1 2h20v15H11l-5 4v-4H1z" fill="#fff"/><path d="M4 6h14M4 9.500h14M4 13h10" stroke="#333" stroke-width="1.300"/></svg><span class="badge">5</span></div>
    <span class="peek"></span>
  </div>
</footer>
<script src="app.js"></script>
</body>
</html>
```
FILE: styles.css
```css
* { box-sizing: border-box; }
html, body { height: 100%; }
body {
  margin: 0;
  display: flex;
  flex-direction: column;
  min-height: 100vh;
  overflow: hidden;
  background: #eaebef;
  color: #333;
  font: 14px/20px "Open Sans", "Noto Sans", sans-serif;
}
button {
  margin: 0;
  padding: 0;
  border: 0;
  background: none;
  font: inherit;
  color: inherit;
  white-space: nowrap;
}
svg { display: block; }
h1, h2, p, ul { margin: 0; padding: 0; font: inherit; }
.sprite { position: absolute; width: 0; height: 0; }

.titlebar { display: flex; align-items: center; height: 28px; flex: none; background: #fff; color: #000; }
.app-icon { width: 20px; height: 20px; margin: 0 5px 0 2px; }
.title { flex: 1; white-space: nowrap; font-family: "Noto Sans", "Open Sans", sans-serif; }
.win-buttons { display: flex; padding-right: 3px; }
.win-buttons button { width: 58px; height: 28px; display: flex; align-items: center; justify-content: center; }
.win-buttons svg { width: 14px; height: 14px; }

.menubar { display: flex; flex: none; gap: 14px; height: 24px; padding: 2px 7px 0; background: #fff; color: #000; font-family: "Noto Sans", "Open Sans", sans-serif; }

.command {
  flex: none;
  display: flex;
  margin-top: 5px;
  padding: 0 1px 0 8px;
  height: 66px;
  border-bottom: 1px solid #d0d6e6;
  position: relative;
}
.command::before, .ribbon::before {
  content: "";
  position: absolute;
  left: 4px;
  top: 1px;
  bottom: 2px;
  width: 3px;
  border: solid #d0d6e6;
  border-width: 0 1px;
}
.command-main { flex: 1; height: 62px; background: #fff; color: #111; }
.history { height: 39px; padding-left: 2px; border-bottom: 1px solid #b9c5dc; line-height: 19px; white-space: nowrap; font-family: "Noto Sans", "Open Sans", sans-serif; }
.prompt { display: flex; height: 23px; padding-left: 2px; line-height: 21px; }
.prompt label { font-weight: 700; color: #000; }
.combo { position: relative; flex: 1; }
.combo input { width: 100%; border: 0; padding: 0 0 0 4px; outline: 0; background: none; font: inherit; color: inherit; height: 21px; display: block; }
.suggest {
  position: absolute;
  z-index: 5;
  left: 3px;
  top: 23px;
  width: 227px;
  list-style: none;
  background: #fff;
  border: 1px solid #000;
  color: #000;
}
.suggest li { height: 20px; padding-left: 2px; line-height: 20px; white-space: nowrap; }
.suggest .focus { outline: 1px dotted #000; outline-offset: -1px; }
.command-side { width: 20px; height: 62px; background: #f0f0f0; }
.scroll-v { height: 39px; display: grid; grid-template-rows: 1fr 1fr; border-bottom: 1px solid #b9c5dc; }
.scroll-v button, .spin button { display: flex; align-items: center; justify-content: center; }
.scroll-v svg { width: 8px; height: 8px; }
.spin { display: grid; grid-template-rows: 1fr 1fr; gap: 1px; height: 23px; padding: 1px; }
.spin button { border: 1px solid #999; }
.spin svg { width: 8px; height: 6px; }

.ribbon { flex: none; height: 75px; position: relative; }
.ribbon::before { top: 4px; bottom: 6px; }
.ribbon-tabs { display: flex; align-items: center; gap: 31px; height: 28px; padding: 6px 1px 0 15px; border-bottom: 1px solid #bfc8de; margin-left: 8px; }
.tab-standard { width: 60px; text-align: left; }
.tab-vis { width: 275px; text-align: right; }
.ribbon-gear { margin-left: auto; color: #909498; }
.ribbon-gear svg { width: 17px; height: 17px; }
.ribbon-icons { display: flex; gap: 4px; padding: 3px 0 0 10px; }
.ribbon-icons svg { width: 24px; height: 24px; flex: none; }
.ribbon-icons .after-gap { margin-left: 224px; }

.workspace { flex: 1; min-height: 0; display: grid; grid-template-columns: 65px minmax(0, 1fr) 424px; }
.tools { padding-top: 4px; }
.tools::before { content: ""; display: block; height: 3px; width: 55px; margin-left: 3px; border: solid #c8d0e4; border-width: 1px 0; }
.tool-grid { display: grid; grid-template-columns: 28px 28px; grid-auto-rows: 28px; align-items: center; }
.tool-grid svg { width: 24px; height: 24px; margin-left: 2px; }

.views { display: flex; flex-direction: column; min-width: 0; }
.viewport {
  position: relative;
  flex: 1;
  min-height: 0;
  border: 1px solid #bfc8de;
  margin-left: 3px;
  background: #9da3aa;
  overflow: hidden;
}
#scene { width: 100%; height: 100%; }
.view-label { position: absolute; left: 0; top: 0; height: 23px; padding: 0 10px; line-height: 22px; font-weight: 700; background: #849ced; }
.triad { stroke: #555; }
.triad text { stroke: none; fill: #555; font-size: 17px; }
.minor { stroke: #9299a0; }
.major { stroke: #85848d; }
.axis-x { stroke: #9f4a4d; stroke-width: 2px; }
.axis-y { stroke: #4b9b4f; stroke-width: 2px; }
#model path { fill: none; stroke: #000; stroke-width: 1px; }
#model .bold { stroke-width: 2px; }
#model .red { stroke: #dc0c0c; stroke-width: 2px; }
#model .dashed { stroke-dasharray: 3 4; }
#model .blue { stroke: #1414f0; }
#model .white { stroke: #fff; stroke-width: 1.5px; }
#model .dark-red { stroke: #5c2020; stroke-width: 1.6px; }

.view-tabs { display: flex; flex: none; height: 33px; margin-top: 2px; padding-top: 2px; border-top: 1px solid #bfc8de; }
.view-tabs button { height: 26px; margin-right: 22px; line-height: 24px; }
.view-tabs .active { padding: 0 7px 0 12px; margin-right: 14px; border: 1px solid #bfc8de; border-top: 0; border-radius: 0 0 4px 12px; }
.view-tabs .add svg { width: 12px; height: 12px; }

.panel { display: flex; flex-direction: column; padding: 0 1px 6px 9px; }
.panel-title { display: flex; align-items: center; gap: 5px; height: 24px; padding: 2px 0 0 3px; }
.grip { flex: 1; height: 3px; border: solid #c8d0e4; border-width: 1px 0; }
.panel-tabs { display: flex; height: 29px; position: relative; z-index: 1; margin-bottom: -1px; }
.panel-tabs button { width: 43px; display: flex; align-items: center; justify-content: center; }
.panel-tabs button:first-child { width: 42px; padding-right: 4px; }
.panel-tabs svg { width: 20px; height: 20px; }
.panel-tabs .on { border: 1px solid #bfc8de; border-bottom: 0; background: #eaebef; }
.panel-tabs .on svg { margin-right: 3px; }
.panel-tabs .panel-gear { margin-left: auto; width: 18px; padding-top: 6px; color: #bcc6da; }
.panel-gear svg { width: 18px; height: 18px; flex: none; }
.panel-body { flex: 1; min-height: 0; display: flex; flex-direction: column; border: 1px solid #bfc8de; padding: 0 4px 1px 0; }
.panel-tools { display: flex; flex: none; gap: 6px; height: 46px; padding: 13px 0 0 9px; border-bottom: 1px solid #bfc8de; margin-right: -4px; }
.panel-tools svg { width: 20px; height: 20px; }
.table-wrap { flex: 1; min-height: 0; overflow: hidden; background: #fff; }
.layers { width: 100%; table-layout: fixed; border-collapse: collapse; }
.layers th, .layers td { padding: 0; height: 24px; white-space: nowrap; overflow: hidden; text-align: left; font-weight: 400; }
.layers th { height: 26px; padding-left: 5px; border-right: 1px solid #dcdfe8; }
.layers th:last-child { border: 0; }
.layers td { border-bottom: 1px solid #ececec; padding-left: 4px; line-height: 22px; }
.layers td:first-child { padding-left: 9px; text-overflow: ellipsis; }
.layers .pick td { background: #849ced; font-weight: 700; border-color: #849ced; }
.layers .icon { padding: 0 1px 0 0; }
.layers .icon svg { margin: auto; }
.c-name { width: 80px; }
.c-i { width: 21px; }
.c-mat { width: 80px; }
.bulb { width: 14px; height: 18px; }
.unlock { width: 16px; height: 18px; }
.mark { width: 18px; height: 15px; }
.diamond { width: 16px; height: 16px; }
.edge { stroke: #111; }
.pick .diamond { stroke: #fff; }
.swatch { display: block; width: 14px; height: 14px; margin: auto; border: 1px solid #222; }
.pick .swatch { border-color: #fff; }
.mat { display: block; width: 16px; height: 16px; border-radius: 50%; background: #fafafa; }
.pick .mat { width: 18px; height: 18px; background: #fff; }
.scroll-h { flex: none; display: flex; height: 19px; background: #f0f0f0; }
.scroll-h button { width: 20px; display: flex; align-items: center; justify-content: center; }
.scroll-h svg { width: 8px; height: 12px; }
.thumb { width: 351px; background: #cdcdcd; margin-right: auto; }

.osnap { position: relative; flex: none; display: flex; align-items: center; height: 31px; padding: 7px 0 0 12px; gap: 8px; border-bottom: 1px solid #bfc8de; }
.osnap::before { content: ""; position: absolute; left: 4px; top: 6px; bottom: 2px; width: 3px; border: solid #d0d6e6; border-width: 0 1px; }
.osnap label { display: flex; align-items: center; gap: 4px; }
.osnap input { appearance: none; flex: none; width: 16px; height: 16px; margin: 0; border: 1px solid #222; background: #fff; }
.osnap input:checked::after { content: ""; display: block; width: 5px; height: 10px; margin: 0 0 0 5px; border: solid #222; border-width: 0 1px 1px 0; transform: rotate(40deg); }
.osnap .soft { gap: 5px; }
.osnap .soft input { width: 14px; height: 14px; border-color: #aaa; background: #e2e2e2; }
.osnap .soft { margin-left: 1px; }
.osnap .last { margin-left: 13px; }

.status { flex: none; display: flex; height: 22px; line-height: 23px; }
.status > * { flex: none; border-right: 1px solid #bfc8de; text-align: center; white-space: nowrap; overflow: hidden; }
.status .s-cplane { width: 60px; }
.status .s-num { width: 108px; }
.status .s-layer { width: 208px; display: flex; align-items: center; gap: 3px; padding-left: 4px; }
.chip { width: 14px; height: 14px; background: #ff7b6b; border: 1px solid #222; }
.status .on { background: #cfd8ef; font-weight: 700; }
.s-80 { width: 81px; }
.s-54 { width: 54px; }
.s-57 { width: 57px; }
.s-90 { width: 91px; }
.s-72 { width: 72px; }
.s-114 { width: 114px; }
.s-48 { width: 49px; }
.status .s-msg { flex: 1; text-align: left; padding-left: 1px; margin-right: 7px; }

.taskbar { flex: none; display: flex; height: 50px; background: #2b2829; color: #fff; }
.start { width: 60px; background: #1d1d1d; display: flex; align-items: center; justify-content: center; }
.start svg { width: 20px; height: 20px; }
.search { display: flex; align-items: center; gap: 15px; width: 430px; padding-left: 15px; background: #f2f2f2; border: solid #bbb; border-width: 1px 0; color: #222; }
.search svg { width: 20px; height: 21px; }
.search input { flex: 1; min-width: 0; border: 0; padding: 0; background: none; font: inherit; font-size: 18px; color: inherit; }
.apps { display: flex; }
.apps button { width: 62px; padding-right: 2px; display: flex; align-items: center; justify-content: center; }
.apps svg { width: 30px; height: 30px; }
.apps .current { background: #565355; border-bottom: 3px solid #76b9ed; padding-top: 3px; }
.seven { font-size: 13px; fill: #fff; }
.tray { margin-left: auto; display: flex; align-items: center; }
.battery { width: 62px; height: 25px; border: 3px solid #fff; background: linear-gradient(90deg, #149b4b 66%, #000 66%); text-align: center; line-height: 19px; font-size: 16px; position: relative; }
.battery::after { content: ""; position: absolute; right: -6px; top: 4px; width: 3px; height: 11px; background: #fff; }
.plug { width: 13px; height: 19px; margin: 0 84px 0 11px; }
.cloud { width: 28px; height: 22px; }
.weather { margin: 0 22px 0 11px; font-size: 17px; }
.t16 { width: 16px; height: 16px; margin-right: 12px; }
.t20 { width: 20px; height: 20px; margin-right: 10px; }
.clock { display: flex; flex-direction: column; align-items: center; gap: 3px; width: 80px; margin: 0 21px 0 0; }
.notify { position: relative; width: 26px; height: 26px; }
.notify svg { width: 22px; height: 22px; }
.badge { position: absolute; left: 9px; top: 10px; width: 20px; height: 20px; border: 1px solid #999; border-radius: 50%; background: #333; text-align: center; font-size: 13px; line-height: 18px; font-weight: 600; }
.peek { width: 1px; height: 50px; margin: 0 5px 0 21px; background: #777; }
```
FILE: app.js
```js
// Layer list
const layers = [
  ["Default", "#000", "Continuo..."], ["diretriz 1", "#f00", "Continuo..."], ["diretriz 2", "#00f", "Continuo..."],
  ["geratriz 1", "#000", "Continuo..."], ["geratriz 2", "#fff", "Continuo..."], ["2.1 spir...", "#ff7b6b", "Continu..."],
  ["2.2 plan...", "#dfff60", "Continuo..."], ["2.3 naut...", "#ff0048", "Continuo..."], ["Layer 01", "#000", "Continuo..."],
  ["aux 1", "#000", "Hidden 01"], ["aux 2", "#fff", "Hidden 01"], ["notas", "#000", "Continuo..."],
  ["texto", "#ff0", "Continuo..."], ["cotas", "#000", "Continuo..."]
];
const icon = (n) => `<svg class="${n}"><use href="#${n}"/></svg>`;
document.getElementById("rows").innerHTML = layers.map(([name, color, line], i) => {
  const on = i === 5;
  return `<tr class="${on ? "pick" : ""}"><td>${name}</td><td class="icon">${on ? icon("mark") : ""}</td>` +
    `<td class="icon">${on ? "" : icon("bulb")}</td><td class="icon">${on ? "" : icon("unlock")}</td>` +
    `<td class="icon"><span class="swatch" style="background:${color}"></span></td><td><span class="mat"></span></td>` +
    `<td>${line}</td><td class="icon" style="color:${color}">${icon("diamond")}</td><td>Default</td></tr>`;
}).join("");

// Construction plane: both line families converge on one horizon
const H = -510, VX = 1091, WX = -10718;
const seg = (cls, x1, y1, x2, y2) => `<line class="${cls}" x1="${x1}" y1="${y1}" x2="${x2}" y2="${y2}"/>`;
const vert = (k, y) => VX + (-0.1707 + 0.1417 * k) * (y - H);
const horz = (j, x) => H + (x - WX) / (11.259 + 0.8635 * j);
let minor = "", major = "";
for (let i = -60; i <= 40; i++) {
  const v = i / 5, line = seg(i % 5 ? "minor" : "major", vert(v, 190), 190, vert(v, 1000), 1000);
  if (i % 5) minor += line; else major += line;
}
for (let i = -30; i <= 40; i++) {
  const v = i / 5, line = seg(i % 5 ? "minor" : "major", 60, horz(v, 60), 1600, horz(v, 1600));
  if (i % 5) minor += line; else major += line;
}
document.getElementById("grid").innerHTML = minor + major +
  seg("axis-y", vert(0, 190), 190, 914, 523) + seg("axis-x", 914, 523, 1600, horz(0, 1600));

// Model curves
const left = ([x, y]) => [740 + x / 3, 340 + y / 3];
const right = ([x, y]) => [1080 + x / 3, 340 + y / 3];
const pairs = (s) => s.trim().split(/\s+/).map((p) => p.split(",").map(Number));
const A = (s) => pairs(s).map(left), B = (s) => pairs(s).map(right);
const f = (n) => n.toFixed(1);
function smooth(p, cls) {
  let d = `M${f(p[0][0])} ${f(p[0][1])}`;
  for (let i = 0; i < p.length - 1; i++) {
    const a = p[i - 1] || p[i], b = p[i], c = p[i + 1], e = p[i + 2] || c;
    d += `C${f(b[0] + (c[0] - a[0]) / 6)} ${f(b[1] + (c[1] - a[1]) / 6)} ${f(c[0] - (e[0] - b[0]) / 6)} ${f(c[1] - (e[1] - b[1]) / 6)} ${f(c[0])} ${f(c[1])}`;
  }
  return `<path class="${cls || ""}" d="${d}"/>`;
}
const poly = (p, cls) => `<path class="${cls || ""}" d="M${p.map((q) => f(q[0]) + " " + f(q[1])).join("L")}"/>`;
// ring: left, right, top, bottom, x of the topmost point
function ring([l, r, t, b, xt], map, cls) {
  const cx = (l + r) / 2, cy = (t + b) / 2, W = (r - l) / 2, Hh = (b - t) / 2;
  const ph = Math.acos(Math.max(-1, Math.min(1, -(xt - cx) / W)));
  const pts = [];
  for (let i = 0; i <= 72; i++) {
    const a = i * Math.PI / 36;
    pts.push(map([cx + W * Math.cos(a), cy + Hh * Math.cos(a - ph)]));
  }
  return poly(pts, cls);
}
let m = "";
m += poly([...A("219,115"), ...B("822,240 990,836"), ...A("50,657 219,115")]);
m += poly(A("125,425 792,482")) + poly(A("798,420 772,722")) + poly(A("614,515 610,572")) + poly(A("530,490 522,552"));
m += poly(A("522,550 783,572"), "dark-red");
[[240,420,198,468,295],[175,390,253,495,240],[421,515,115,423,452],[529,574,88,413,549],[697,777,63,413,765],
 [731,836,63,418,819],[763,899,65,426,873],[122,367,310,560,215],[126,367,325,550,225],[120,368,340,545,222],
 [122,368,371,585,235],[145,368,433,633,290],[220,411,487,678,345],[331,475,529,716,437],[467,543,556,737,527],
 [538,579,563,738,573],[646,677,556,711,655],[672,730,550,683,688],[698,757,530,647,712],[700,780,505,610,728],
 [701,783,519,604,745],[700,747,487,540,727],[660,716,470,512,690]
].forEach((r) => { m += ring(r, left); });
[[-130,124,85,470,64],[-10,362,125,538,255],[94,579,182,632,415],[177,768,256,748,520],[232,914,340,887,590]]
  .forEach((r) => { m += ring(r, right); });
m += ring([256, 1002, 434, 1044, 595], right, "bold");
m += poly(A("655,70 629,410"), "bold") + poly(A("617,563 609,727"), "bold");
// inner coil
[[530,575,478,530,550],[533,580,490,537,555],[545,590,483,535,566],[530,562,490,528,545],[555,596,500,538,575],
 [545,575,470,505,560],[536,570,477,512,552]].forEach((r) => { m += ring(r, left); });
[590, 598, 605, 612, 618, 624, 631].forEach((x) => { m += poly(A(`${x},460 ${x - 3},492`)); });
m += poly(A("570,520 605,512 615,518 590,524 575,516"));
m += smooth([...B("683,440 655,385 573,295 520,255 437,207 340,170 207,130 105,108"), ...A("1020,95 960,90 850,81 760,81 655,90 560,106 470,133 380,180 300,238 262,280 243,330 248,390 285,455 310,482")]);
m += smooth([...B("551,1028 540,975 510,885 460,795 420,745 370,690 295,625 235,585 170,540 100,505 0,463"), ...A("990,453 890,423 800,402 720,390 640,385 550,387 470,397 420,410 370,430 364,465 375,495 410,535 455,558 520,573 590,578 650,573 690,560 704,545")]);
m += smooth(A("148,560 185,615 230,655 290,677 400,683 460,712 540,725 600,722 660,708 715,675 760,630 783,575 775,530 740,490 690,470 640,461 590,461 545,475"));
m += smooth([...B("260,660 250,620 233,582 180,513 95,443 0,397"), ...A("985,385 890,355 800,335 720,326 640,324 560,335 490,354 430,383 385,420 367,462 375,510 405,548 445,575 500,594 570,603 625,600 665,588 695,567 702,545 693,520 665,500 625,490 590,493 572,505 570,517")], "blue");
const spiral = [...B("990,832 965,760 907,665 850,590 763,510 672,440 575,383 505,347 368,288 235,242 120,211 0,186"), ...A("960,176 895,168 770,159 700,157 590,163 490,182 422,199 350,221 285,252 240,280 180,328 145,375 122,425 115,465 125,505 147,543 175,575 215,607 265,637 340,666 415,686 495,697 560,700 625,692 690,672 740,643 770,608 783,575 778,545 755,513 715,487 670,473 620,466 575,470 545,483 530,503 537,522 555,534 580,537 602,530 612,517")];
m += smooth(spiral, "red") + smooth(spiral, "dashed");
m += poly(A("620,512 700,530"), "white") + poly([...A("950,590"), ...B("148,640")], "white");
m += poly(B("375,693 603,746"), "white") + poly(B("843,801 985,834"), "white");
document.getElementById("model").innerHTML = m;
```
